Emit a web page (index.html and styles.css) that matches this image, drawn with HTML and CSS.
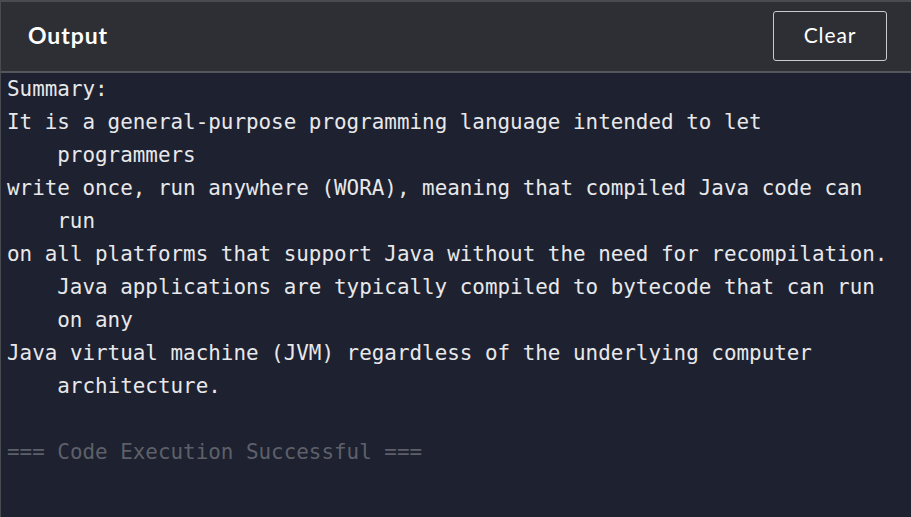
FILE: index.html
```html
<!DOCTYPE html>
<html>
<head>
<meta charset="utf-8">
<link rel="stylesheet" href="styles.css">
</head>
<body>
<div class="panel">
  <div class="header">
    <span class="title">Output</span>
    <button class="clear">Clear</button>
  </div>
  <div class="output">
    <div class="line">Summary:</div>
    <div class="line">It is a general-purpose programming language intended to let<span class="cont">programmers</span></div>
    <div class="line">write once, run anywhere (WORA), meaning that compiled Java code can<span class="cont">run</span></div>
    <div class="line">on all platforms that support Java without the need for recompilation.<span class="cont">Java applications are typically compiled to bytecode that can run</span><span class="cont">on any</span></div>
    <div class="line">Java virtual machine (JVM) regardless of the underlying computer<span class="cont">architecture.</span></div>
    <div class="line blank">&nbsp;</div>
    <div class="line success">=== Code Execution Successful ===</div>
  </div>
</div>
</body>
</html>
```
FILE: styles.css
```css
html, body {
  margin: 0;
  padding: 0;
  background: #1d2130;
}
body {
  width: 911px;
  height: 517px;
  overflow: hidden;
}
.panel {
  height: 517px;
  display: flex;
  flex-direction: column;
  border-top: 2px solid #4a4b50;
  border-left: 1px solid #4a4b50;
  box-sizing: border-box;
}
.header {
  height: 69px;
  flex: none;
  display: flex;
  align-items: center;
  justify-content: space-between;
  background: #2e2f34;
  border-bottom: 2px solid #55565b;
  padding: 0 24px 0 27px;
}
.title {
  font-family: "Lato", "Open Sans", sans-serif;
  font-weight: 700;
  font-size: 23px;
  color: #ffffff;
  letter-spacing: 0.9px;
  margin-top: -3px;
}
.clear {
  width: 114px;
  height: 50px;
  background: transparent;
  border: 1px solid #c9cacd;
  border-radius: 3px;
  color: #ffffff;
  font-family: "Lato", "Open Sans", sans-serif;
  font-size: 21px;
  font-weight: 400;
  letter-spacing: 0.9px;
  cursor: pointer;
  margin-top: -2px;
  padding: 0 0 2px 0;
}
.output {
  flex: 1;
  padding: 0 6px;
  font-family: "DejaVu Sans Mono", monospace;
  font-size: 20.9px;
  line-height: 33px;
  color: #e8e8ea;
}
.line {
  white-space: pre;
}
.line .cont {
  display: block;
  padding-left: 4ch;
}
.success {
  color: #5e6069;
}
```
